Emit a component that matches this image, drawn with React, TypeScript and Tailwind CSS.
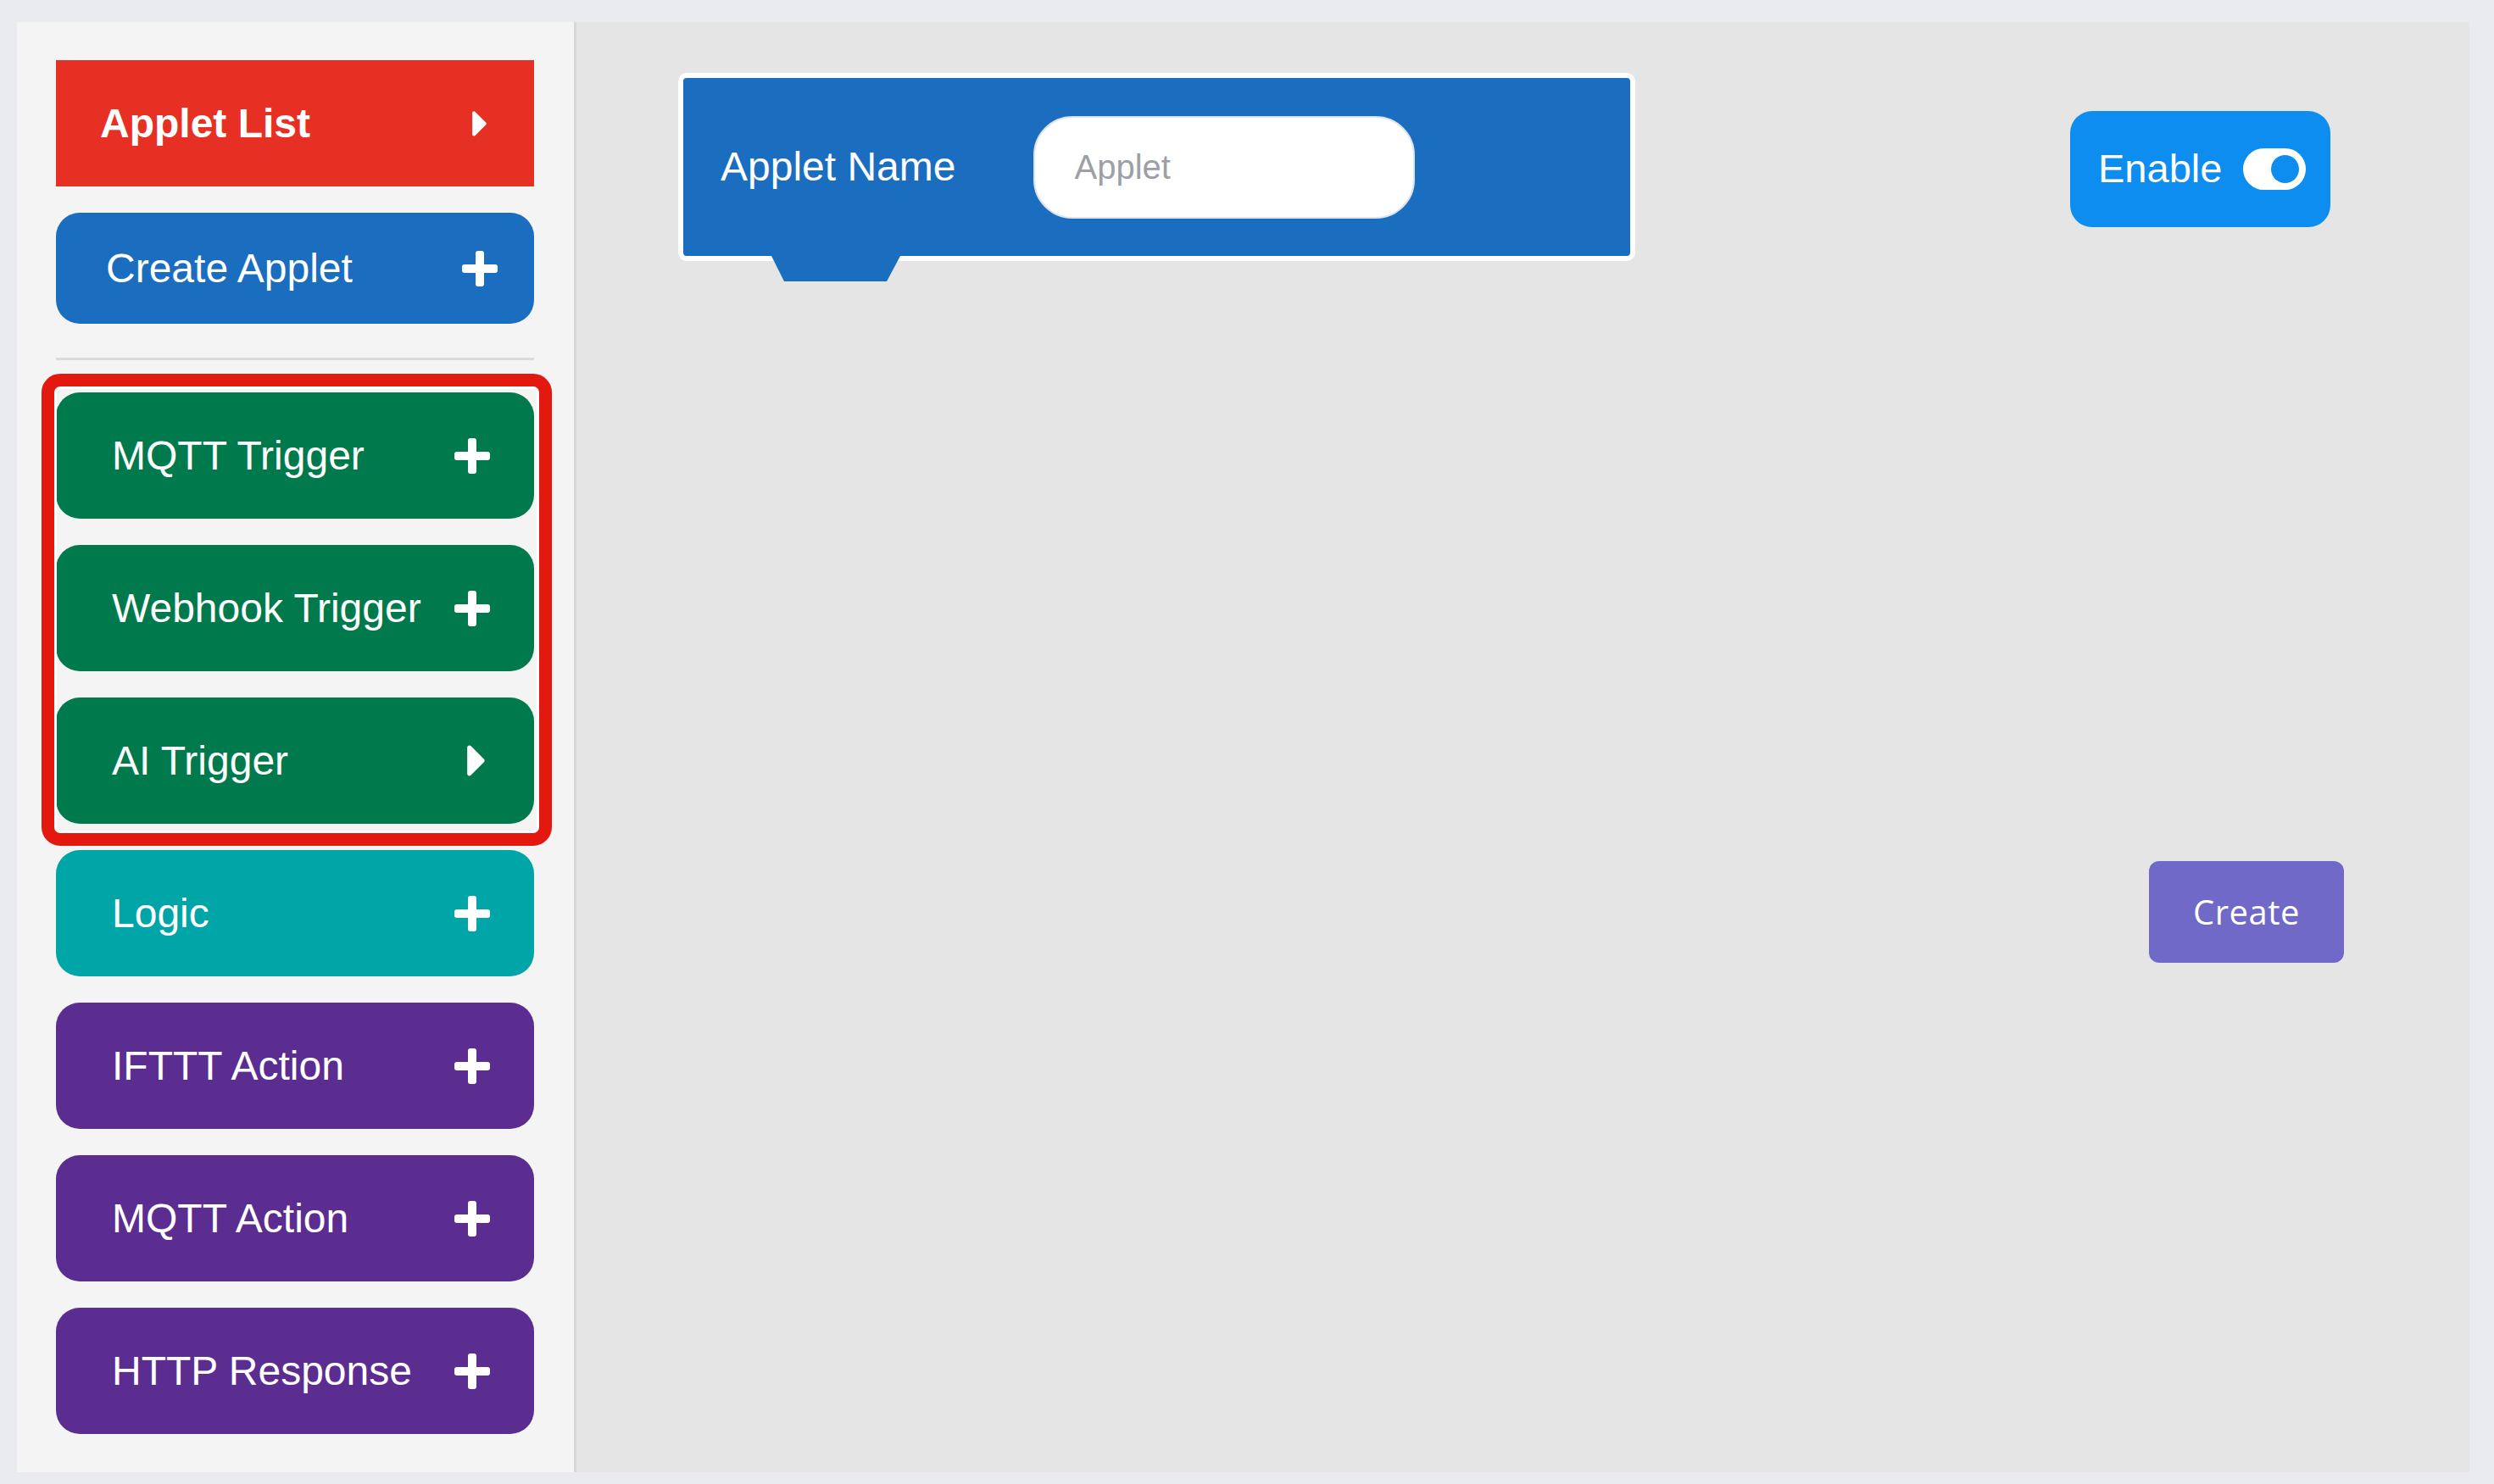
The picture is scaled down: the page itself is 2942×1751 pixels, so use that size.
import React from "react";

const PlusIcon = () => (
  <svg width="42" height="42" viewBox="0 0 42 42" fill="white">
    <rect x="16" y="0" width="10" height="42" rx="3" />
    <rect x="0" y="16" width="42" height="10" rx="3" />
  </svg>
);

const CaretIcon = ({ w, h }: { w: number; h: number }) => (
  <svg width={w} height={h} viewBox="0 104 170 305" fill="white">
    <path d="M0 384.662V127.338c0-17.818 21.543-26.741 34.142-14.142l128.662 128.662c7.81 7.81 7.81 20.474 0 28.284L34.142 398.804C21.543 411.404 0 402.48 0 384.662z" />
  </svg>
);

const SideButton = ({
  label,
  color,
  icon = "plus",
}: {
  label: string;
  color: string;
  icon?: "plus" | "caret";
}) => (
  <div
    className={`flex h-[149px] w-[564px] items-center justify-between rounded-[28px] pl-[66px] pr-[52px] text-[48px] text-white ${color}`}
  >
    <span>{label}</span>
    {icon === "plus" ? (
      <PlusIcon />
    ) : (
      <span className="mr-[6px]">
        <CaretIcon w={21} h={37} />
      </span>
    )}
  </div>
);

export default function App() {
  return (
    <div className="h-[1751px] w-full bg-[#eaebef] pl-[20px] pt-[26px] font-[family-name:'Liberation_Sans',Arial,sans-serif]">
      <div className="flex h-[1711px] w-[2893px]">
        {/* sidebar */}
        <aside className="flex w-[660px] flex-col border-r-[3px] border-[#d8d8d8] bg-[#f4f4f4] pl-[46px] pt-[45px]">
          <div className="flex h-[149px] w-[564px] items-center justify-between bg-[#e53023] pl-[52px] pr-[56px] text-[48px] font-bold text-white">
            <span>Applet List</span>
            <CaretIcon w={17} h={30} />
          </div>

          <div className="mt-[31px] flex h-[131px] w-[564px] items-center justify-between rounded-[28px] bg-[#1a6dbf] pl-[59px] pr-[43px] text-[48px] text-white">
            <span>Create Applet</span>
            <PlusIcon />
          </div>

          <div className="mt-[40px] h-[3px] w-[564px] bg-[#dadada]" />

          <div className="relative mt-[38px] flex w-[564px] flex-col gap-[31px]">
            <SideButton label="MQTT Trigger" color="bg-[#007a4c]" />
            <SideButton label="Webhook Trigger" color="bg-[#007a4c]" />
            <SideButton label="AI Trigger" color="bg-[#007a4c]" icon="caret" />
            <div className="pointer-events-none absolute -bottom-[26px] -left-[17px] -right-[21px] -top-[22px] rounded-[22px] border-[15px] border-[#e3180e] shadow-[inset_0_0_0_3px_#ffffff]" />
          </div>

          <div className="mt-[31px] flex flex-col gap-[31px]">
            <SideButton label="Logic" color="bg-[#00a5a8]" />
            <SideButton label="IFTTT Action" color="bg-[#5b2d90]" />
            <SideButton label="MQTT Action" color="bg-[#5b2d90]" />
            <SideButton label="HTTP Response" color="bg-[#5b2d90]" />
          </div>
        </aside>

        {/* workspace */}
        <main className="flex flex-1 flex-col bg-[#e5e5e5]">
          <div className="flex items-start justify-between pl-[120px] pr-[164px] pt-[60px]">
            <div className="relative">
              <div className="flex h-[222px] w-[1129px] items-center rounded-[10px] border-[6px] border-white bg-[#1a6dbf] pl-[44px]">
                <span className="text-[48px] text-white">Applet Name</span>
                <div className="ml-[92px] flex h-[121px] w-[450px] items-center rounded-[46px] border-2 border-[#dde4ee] bg-white pl-[46px] text-[40px] text-[#9d9fa6]">
                  Applet
                </div>
              </div>
              <svg
                className="absolute left-[110px] top-[216px]"
                width="152"
                height="30"
                viewBox="0 0 152 30"
              >
                <polygon points="0,0 152,0 136,30 15,30" fill="#1a6dbf" />
              </svg>
            </div>

            <div className="mt-[45px] flex h-[137px] w-[307px] items-center rounded-[26px] bg-[#0d8def] pl-[33px] text-[47px] text-white">
              <span>Enable</span>
              <svg className="ml-[25px]" width="74" height="49" viewBox="0 0 74 49">
                <rect x="0" y="0" width="74" height="49" rx="24.5" fill="white" />
                <circle cx="49.5" cy="24.5" r="16.5" fill="#0d8def" />
              </svg>
            </div>
          </div>

          <div className="mt-[708px] flex justify-end pr-[148px]">
            <div className="flex h-[120px] w-[230px] items-center justify-center rounded-[12px] bg-[#7169c7] font-[family-name:'Open_Sans',sans-serif] text-[40px] tracking-[0.5px] text-white">
              Create
            </div>
          </div>
        </main>
      </div>
    </div>
  );
}
